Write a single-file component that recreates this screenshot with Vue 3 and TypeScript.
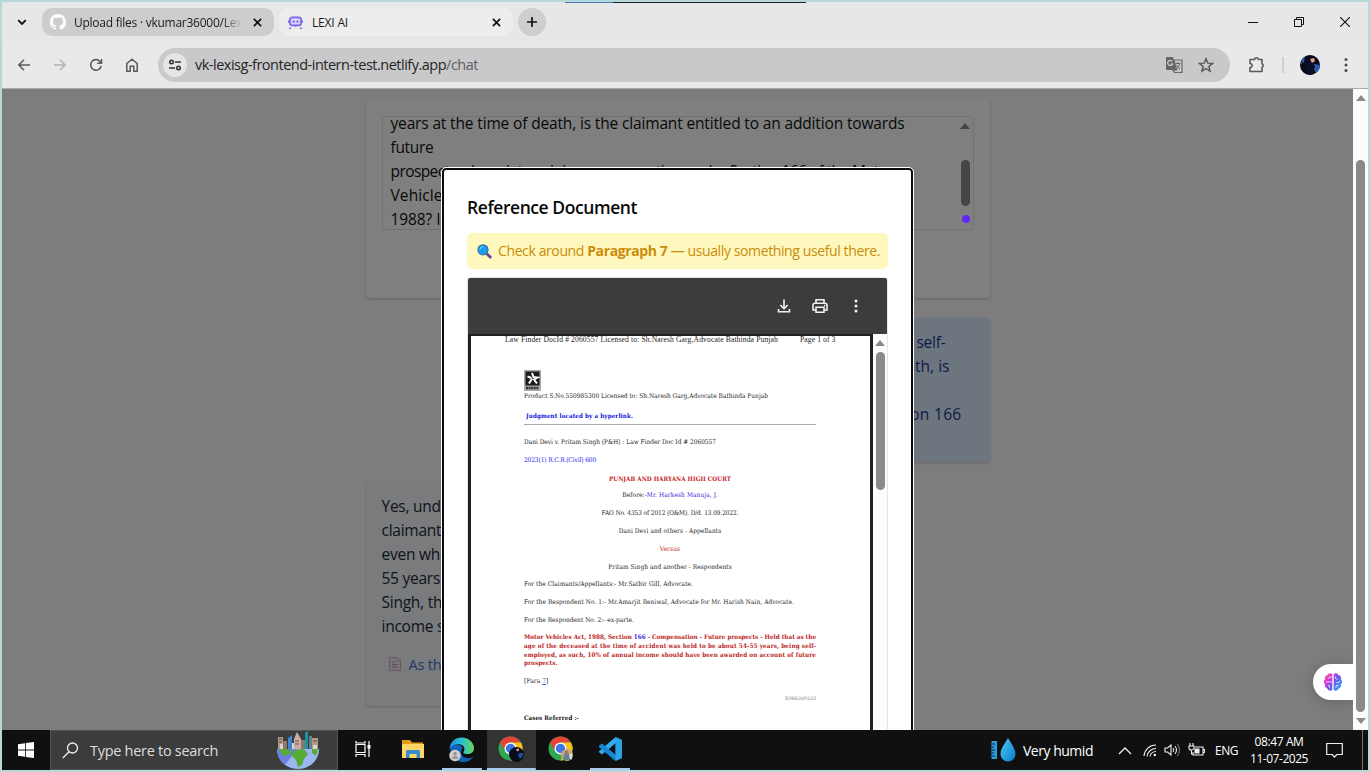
<script setup lang="ts">
import type { Directive } from 'vue'

// Tunes letter spacing so a single line of text takes the given width.
const vFit: Directive<HTMLElement, number> = {
  mounted(el, binding) {
    const count = (el.textContent ?? '').trim().length
    const natural = el.getBoundingClientRect().width
    if (count > 0) el.style.letterSpacing = `${(binding.value - natural) / count}px`
  },
}

interface Part { text: string; tone?: string }
interface Line { parts: Part[]; width: number; center?: boolean; bold?: boolean }

const question: { text: string; width: number }[] = [
  { text: 'years at the time of death, is the claimant entitled to an addition towards', width: 514 },
  { text: 'future', width: 43 },
  { text: 'prospects when determining compensation under Section 166 of the Motor', width: 503 },
  { text: 'Vehicles Act,', width: 91 },
  { text: '1988? If so, how much?', width: 165 },
]

const sent: { text: string; width: number }[] = [
  { text: 'In a motor accident claim where the deceased person was self-', width: 439 },
  { text: 'employed and aged about 54-55 years at the time of death, is', width: 443 },
  { text: 'the claimant entitled to an addition towards future', width: 360 },
  { text: 'prospects when computing compensation under Section 166', width: 455 },
  { text: 'of the Motor Vehicles Act, 1988? If so, how much?', width: 350 },
]

const answer = [
  'Yes, under Section 166 of the Motor Vehicles Act, 1988, the',
  'claimants are entitled to an addition for future prospects',
  'even when the deceased was self-employed and aged 54-',
  '55 years at the time of the accident. In Dani Devi v. Pritam',
  'Singh, the Court held that 10% of the deceased’s annual',
  'income should be awarded as future prospects.',
]

const lines: Line[] = [
  { parts: [{ text: 'Dani Devi v. Pritam Singh (P&H) : Law Finder Doc Id # 2060557' }], width: 192 },
  { parts: [{ text: '2023(1) R.C.R.(Civil) 600', tone: 'blue' }], width: 72 },
  { parts: [{ text: 'PUNJAB AND HARYANA HIGH COURT', tone: 'red' }], width: 122, center: true, bold: true },
  { parts: [{ text: 'Before:-' }, { text: 'Mr. Harkesh Manuja, J.', tone: 'violet' }], width: 95.5, center: true },
  { parts: [{ text: 'FAO No. 4353 of 2012 (O&M). D/d. 13.09.2022.' }], width: 137, center: true },
  { parts: [{ text: 'Dani Devi and others - Appellants' }], width: 102.5, center: true },
  { parts: [{ text: 'Versus', tone: 'red' }], width: 20.5, center: true },
  { parts: [{ text: 'Pritam Singh and another - Respondents' }], width: 123.5, center: true },
  { parts: [{ text: 'For the Claimants/Appellants:- Mr.Satbir Gill, Advocate.' }], width: 169 },
  { parts: [{ text: 'For the Respondent No. 1:- Mr.Amarjit Beniwal, Advocate for Mr. Harish Nain, Advocate.' }], width: 270 },
  { parts: [{ text: 'For the Respondent No. 2:- ex-parte.' }], width: 110 },
]

const headnote: Line[] = [
  { parts: [{ text: 'Motor Vehicles Act, 1988, Section ' }, { text: '166', tone: 'violet' }, { text: ' - Compensation - Future prospects - Held that as the' }], width: 292 },
  { parts: [{ text: 'age of the deceased at the time of accident was held to be about 54-55 years, being self-' }], width: 292 },
  { parts: [{ text: 'employed, as such, 10% of annual income should have been awarded on account of future' }], width: 292 },
  { parts: [{ text: 'prospects.' }], width: 33.5 },
]
</script>

<template>
  <div class="screen">
    <div class="top-edge"></div>
    <header class="tabs">
      <svg class="tab-menu" width="12" height="12" viewBox="0 0 12 12"><path d="M2.2 4.2 6 8l3.800-3.800" fill="none" stroke="#111" stroke-width="1.9" /></svg>
      <div class="tab old">
        <svg class="fav" width="16" height="16" viewBox="0 0 16 16"><path fill="#fff" d="M8 0C3.580 0 0 3.580 0 8c0 3.540 2.290 6.530 5.470 7.590.4.070.550-.170.550-.380 0-.190-.010-.820-.010-1.490-2.010.370-2.530-.490-2.690-.940-.090-.230-.480-.940-.820-1.130-.280-.150-.680-.520-.010-.530.630-.010 1.080.580 1.230.820.720 1.210 1.870.870 2.330.660.070-.520.280-.870.510-1.070-1.780-.2-3.640-.890-3.640-3.950 0-.870.310-1.590.820-2.150-.080-.2-.360-1.020.080-2.120 0 0 .670-.210 2.200.820.640-.180 1.320-.270 2-.270s1.360.090 2 .270c1.530-1.040 2.200-.820 2.200-.820.440 1.100.160 1.920.080 2.120.510.560.820 1.270.820 2.150 0 3.070-1.870 3.750-3.650 3.950.290.250.540.730.540 1.480 0 1.070-.010 1.930-.010 2.200 0 .210.150.460.550.380A8 8 0 0 0 16 8c0-4.420-3.580-8-8-8z" /></svg>
        <span class="tab-name"><span v-fit="171" class="t">Upload files · vkumar36000/Lexi</span></span>
        <svg class="x" width="9" height="9" viewBox="0 0 10 10"><path d="m1 1 8 8M9 1 1 9" stroke="#111" stroke-width="1.900" /></svg>
      </div>
      <div class="tab current">
        <svg class="fav" width="15" height="15" viewBox="0 0 16 16">
          <rect x="2" y="2.500" width="12" height="8.500" rx="2.500" fill="#d6cff6" stroke="#7d66e8" stroke-width="1.800" />
          <circle cx="6" cy="7" r="1" fill="#5d43d8" /><circle cx="10" cy="7" r="1" fill="#5d43d8" />
          <path d="M.5 5.500v3M15.500 5.500v3M1 14h2.500M12.500 14H15M7 12h2" stroke="#8a76ea" stroke-width="1.600" />
        </svg>
        <span class="tab-name"><span v-fit="36" class="t">LEXI AI</span></span>
        <svg class="x" width="9" height="9" viewBox="0 0 10 10"><path d="m1 1 8 8M9 1 1 9" stroke="#111" stroke-width="1.900" /></svg>
      </div>
      <div class="plus"><svg width="12" height="12" viewBox="0 0 12 12"><path d="M6 1v10M1 6h10" stroke="#111" stroke-width="1.700" /></svg></div>
      <div class="window-buttons">
        <svg width="10" height="10" viewBox="0 0 10 10"><path d="M0 5.500h10" stroke="#111" /></svg>
        <svg width="10" height="10" viewBox="0 0 10 10" fill="none" stroke="#111"><path d="M.5 2.500h7v7h-7zM2.500 2.500v-2h7v7h-2" /></svg>
        <svg width="10" height="10" viewBox="0 0 10 10"><path d="m0 0 10 10M10 0 0 10" stroke="#111" stroke-width="1.100" /></svg>
      </div>
    </header>

    <div class="toolbar">
      <div class="nav">
        <svg width="16" height="16" viewBox="0 0 16 16" fill="none" stroke="#5a5a5a" stroke-width="1.500"><path d="M14 8H3M8 2.800 2.800 8 8 13.200" /></svg>
        <svg width="16" height="16" viewBox="0 0 16 16" fill="none" stroke="#b3b3b3" stroke-width="1.500"><path d="M2 8h11M8 2.800 13.200 8 8 13.200" /></svg>
        <svg width="16" height="16" viewBox="0 0 16 16" fill="none" stroke="#5a5a5a" stroke-width="1.600"><path d="M13.200 9A5.300 5.300 0 1 1 11.800 4.200L13.500 6M13.500 2v4.300H9.200" /></svg>
        <svg width="16" height="16" viewBox="0 0 16 16" fill="none" stroke="#5a5a5a" stroke-width="1.500"><path d="M2.800 14.200V6.500L8 2.200l5.200 4.300v7.700H9.800V9.300H6.200v4.900z" /></svg>
      </div>
      <div class="address">
        <div class="site"><svg width="14" height="14" viewBox="0 0 14 14" fill="none" stroke="#333" stroke-width="1.600"><circle cx="3.500" cy="4" r="1.700" /><path d="M7 4h6M1 10h6" /><circle cx="10.500" cy="10" r="1.700" /></svg></div>
        <span v-fit="283" class="t url">vk-lexisg-frontend-intern-test.netlify.app<i>/chat</i></span>
        <svg class="translate" width="18" height="18" viewBox="0 0 18 18">
          <path d="M1 1h7l3 13H2.500Q1 14 1 12.500z" fill="#666" />
          <path d="M9 4h8v12.500H9.500L8 14h3.500z" fill="#c9c9cb" stroke="#666" stroke-width="1.200" />
          <path d="M7.300 5.700A2.500 2.500 0 1 0 7.500 8H5.500" fill="none" stroke="#ddd" stroke-width="1.100" />
          <path d="M10.500 7.500h5M13 6.200v1.300M14.500 8c-.5 2.200-1.500 3.700-3 5M11.500 9c.7 1.700 1.700 2.800 3.500 4" fill="none" stroke="#666" />
        </svg>
        <svg class="star" width="16" height="16" viewBox="0 0 16 16"><path d="m8 1.700 1.800 4.400 4.800.3-3.700 3 1.200 4.700L8 11.500l-4.100 2.600 1.200-4.700-3.700-3 4.800-.3z" fill="none" stroke="#555" stroke-width="1.400" /></svg>
      </div>
      <svg class="puzzle" width="18" height="18" viewBox="0 0 18 18"><path d="M2 3.500h4.700a1.800 1.800 0 0 1 3.600 0H14v4.300a1.800 1.800 0 0 1 0 3.400v4.300H2v-4a2 2 0 0 0 0-4z" fill="none" stroke="#5a5a5a" stroke-width="1.600" stroke-linejoin="round" /></svg>
      <div class="divider"></div>
      <svg class="avatar" width="20" height="20" viewBox="0 0 20 20"><defs><clipPath id="face"><circle cx="10" cy="10" r="10" /></clipPath></defs><g clip-path="url(#face)"><path fill="#080b1c" d="M0 0h20v20H0z" /><path fill="#2c5cab" d="m14 9 6 1v5l-3 4-4-5zM2 4l3-2-1 5-3 2z" /><path fill="#e0a591" d="m10 4 4-1 1 3-3 2z" /><path fill="#0c1026" d="m6 9 6-1 3 3-2 9H3z" /></g></svg>
      <svg class="dots" width="4" height="16" viewBox="0 0 4 16" fill="#4a4a4a"><circle cx="2" cy="2.500" r="1.500" /><circle cx="2" cy="8" r="1.500" /><circle cx="2" cy="13.500" r="1.500" /></svg>
    </div>

    <div class="viewport">
      <main class="page">
        <div class="column">
          <section class="card">
            <div class="textarea">
              <div class="typed"><div v-for="l in question" :key="l.text" class="row"><span v-fit="l.width" class="t">{{ l.text }}</span></div></div>
              <div class="area-scroll"><b class="arrow"></b><i></i></div>
            </div>
          </section>
          <section class="bubble sent">
            <div v-for="l in sent" :key="l.text" class="row"><span v-fit="l.width" class="t">{{ l.text }}</span></div>
          </section>
          <section class="bubble answer">
            <div v-for="l in answer" :key="l" class="row"><span class="t">{{ l }}</span></div>
            <div class="citation">
              <svg width="12" height="14" viewBox="0 0 12 14"><path d="M.5.500h8l3 3v10H.500zM8 1v3h3.500" fill="#f4e5f5" stroke="#c9b7cd" /><path d="M3 5h3M3 7.500h6M3 10h6" stroke="#b29fb6" /></svg>
              <span class="t">As the age of the deceased at the time of accident</span>
            </div>
          </section>
        </div>
        <div class="shade"></div>
        <div class="cursor-dot"></div>
        <div class="brain">
          <svg width="20" height="20" viewBox="0 0 20 20">
            <defs><linearGradient id="bg" x1="0" y1="0" x2="1" y2=".7"><stop offset="0" stop-color="#ff6262" /><stop offset=".35" stop-color="#d93ce0" /><stop offset=".6" stop-color="#7352e8" /><stop offset="1" stop-color="#31a8f5" /></linearGradient></defs>
            <path fill="url(#bg)" d="M9.300 2v16c-2 1.500-4.500.5-5-1.500C2.200 16 1.500 14 2 12 .3 11 .5 8.500 2 7.500 1.500 5 2.500 3.500 4.500 3c1-1.800 3.300-2.200 4.800-1zM10.700 2v16c2 1.500 4.500.5 5-1.500 2.100-.5 2.800-2.500 2.300-4.500 1.700-1 1.500-3.500 0-4.500.5-2.500-.5-4-2.500-4.500-1-1.800-3.300-2.200-4.800-1z" />
            <path d="M3 10h6M5 6.500l2-1.500h2M5 13.500h1.500V16M12.500 4.500v2l2 1M17 9l-2 2-2-1M13 16v-2.500h2.500" fill="none" stroke="#fff" stroke-opacity=".8" stroke-width=".9" />
          </svg>
        </div>

        <div class="modal">
          <h2><span v-fit="170" class="t">Reference Document</span></h2>
          <div class="hint">
            <svg width="15" height="15" viewBox="0 0 15 15"><path d="m9.500 9.500 3.800 3.600" stroke="#6b4b8b" stroke-width="2.900" stroke-linecap="round" /><circle cx="6" cy="5.800" r="5" fill="#18a0ee" stroke="#3e6ea8" stroke-width="1.200" /><path d="M3 5.500Q3.500 3 6 2.800" fill="none" stroke="#70cdfa" stroke-width="1.100" /></svg>
            <span v-fit="382" class="t">Check around <b>Paragraph 7</b> — usually something useful there.</span>
          </div>
          <div class="viewer">
            <div class="viewer-bar">
              <svg width="16" height="16" viewBox="0 0 16 16" fill="none" stroke="#f1f1f1" stroke-width="1.600"><path d="M8 1.500v9M4.300 7 8 10.700 11.700 7M2.500 11v2.700h11V11" /></svg>
              <svg width="16" height="16" viewBox="0 0 16 16" fill="none" stroke="#f1f1f1" stroke-width="1.600"><path d="M4 5V1.800h8V5M4 12H1V7.500Q1 5.300 3 5.300h10q2 0 2 2.200V12h-3M4 9.300h8v5H4z" /><path d="M12 7.500h1.300" /></svg>
              <svg width="16" height="16" viewBox="0 0 16 16" fill="#f1f1f1"><circle cx="8" cy="3" r="1.500" /><circle cx="8" cy="8" r="1.500" /><circle cx="8" cy="13" r="1.500" /></svg>
            </div>
            <div class="viewer-body">
              <article class="sheet">
                <div class="licence">
                  <span v-fit="273" class="t">Law Finder DocId # 2060557 Licensed to: Sh.Naresh Garg,Advocate Bathinda Punjab</span>
                  <span v-fit="35.500" class="t">Page 1 of 3</span>
                </div>
                <div class="body">
                  <svg class="mark" width="17" height="21" viewBox="0 0 17 21"><path fill="#aaa" d="M0 0h17v21H0z" /><path fill="#1b1b1b" d="M1.500 1.500h14v14h-14z" /><path d="m8 3 1.500 4 4 .5-3.500 2 3 4M8 8.500l-3 5M3.500 6.500l4 1.500" fill="none" stroke="#fff" stroke-width="2" /><path d="M2 18h13" stroke="#333" stroke-width="2.500" stroke-dasharray="2 .6" /></svg>
                  <div class="product"><span v-fit="244" class="t">Product S.No.550985300 Licensed to: Sh.Naresh Garg,Advocate Bathinda Punjab</span></div>
                  <div class="judgment"><span v-fit="107" class="t">Judgment located by a hyperlink.</span></div>
                  <div v-for="l in lines" :key="l.parts[0].text" class="line" :class="{ center: l.center, bold: l.bold }">
                    <span v-fit="l.width" class="t"><span v-for="p in l.parts" :key="p.text" :class="p.tone">{{ p.text }}</span></span>
                  </div>
                  <div class="headnote">
                    <div v-for="l in headnote" :key="l.parts[0].text"><span v-fit="l.width" class="t"><span v-for="p in l.parts" :key="p.text" :class="p.tone">{{ p.text }}</span></span></div>
                  </div>
                  <div class="line para"><span v-fit="24.500" class="t">[Para <u>7</u>]</span></div>
                  <div class="code"><span v-fit="31" class="t">E/06618/01/23</span></div>
                  <div class="line cases"><span v-fit="55" class="t">Cases Referred :-</span></div>
                </div>
              </article>
              <div class="viewer-scroll"><b class="arrow"></b><i></i></div>
            </div>
          </div>
        </div>
      </main>
      <div class="page-scroll"><b class="arrow"></b><i></i><b class="arrow down"></b></div>
    </div>

    <footer class="taskbar">
      <div class="start"><svg width="16" height="16" viewBox="0 0 16 16" fill="#fff"><path d="m0 2.200 7-1v6.400H0zM7.800 1.100 16 0v7.600H7.800zM0 8.400h7v6.400l-7-1zM7.800 8.400H16V16l-8.200-1.100z" /></svg></div>
      <div class="search">
        <svg width="17" height="17" viewBox="0 0 17 17" fill="none" stroke="#eee" stroke-width="1.300"><circle cx="10.500" cy="6" r="5" /><path d="M7 9.700.8 16" /></svg>
        <span v-fit="128" class="t">Type here to search</span>
        <svg class="city" width="44" height="39" viewBox="0 0 44 39">
          <path fill="#9cb6f2" d="M1 18h42c0 11-9 20-21 20S1 29 1 18z" /><path fill="#6a7fe0" d="M1 18h20L9 34C4 30 1 24 1 18z" />
          <path fill="#58ab35" d="M3 18h10l2 4-5 3-4-1zM18 19l10-1 4 5-4 5-2 6-4 2-2-7-5-5zM36 18h6l-2 7-4-3z" />
          <path fill="#b39b84" d="M2 6h5v12H2zM36 7h6v11h-6z" /><path fill="#8b7770" d="M7 10h4v8H7zM25 9h4v9h-4z" /><path fill="#3f85ce" d="m12 7 4-3v14h-4z" /><path fill="#c9aea3" d="m18 8 3-7 4 7v10h-7z" /><path fill="#1994a3" d="m29 2 3-2v18h-3z" /><path fill="#687f8c" d="M33 5h3v13h-3z" /><path fill="#d5d6d3" d="M4 13h3v5H4zM16 12h2v6h-2zM37 14h4v4h-4z" />
          <path d="M3 8h3M3 11h3M19 10h4M19 13h4M37 10h4" stroke="#604f49" />
        </svg>
      </div>
      <div class="apps">
        <div class="app"><svg width="18" height="18" viewBox="0 0 18 18" fill="none" stroke="#fff" stroke-width="1.200"><path d="M2 4.500h9v8H2zM2 1v2h9V1M2 17v-2.500h9V17M15 1v16" /><path fill="#fff" stroke="none" d="M13.500 5h3v3.500h-3z" /></svg></div>
        <div class="app"><svg width="22" height="20" viewBox="0 0 22 20"><path fill="#e19b18" d="M0 1h8l2 2.500h11V10H0z" /><path fill="#fed567" d="M0 5h22v14H0z" /><path fill="#388bc9" d="M4 19v-6.500Q4 11 5.500 11h11q1.500 0 1.500 1.500V19h-3.500v-4h-7v4z" /></svg></div>
        <div class="app open">
          <svg width="25" height="25" viewBox="0 0 25 25"><defs><linearGradient id="edge"><stop stop-color="#1b91dc" /><stop offset=".5" stop-color="#29c1d3" /><stop offset="1" stop-color="#69d65a" /></linearGradient></defs>
            <path fill="#1263b5" d="M1 10c0 9 6 15 13 15 5 0 8-2 10-5-6 3-12 0-12-5 0-2 1-3 2-4C9 5 2 6 1 10z" /><path fill="url(#edge)" d="M.5 12C1 5 6 .5 12.500.500 20 .5 25 6 25 11c0 5-4 6.500-8 6-3-.4-3-1.500-2-3 2-4-2-7-6-7-4 0-7 2-8.500 5z" /><circle cx="6" cy="18.500" r="5.700" fill="#d2d2d2" /><circle cx="6" cy="16.700" r="2" fill="#9a9a9a" /><path fill="#9a9a9a" d="M2.500 22c0-4 7-4 7 0z" /></svg>
        </div>
        <div v-for="n in 2" :key="n" class="app" :class="{ focused: n === 1 }">
          <svg width="26" height="26" viewBox="0 0 26 26"><circle cx="12.500" cy="12.500" r="12" fill="#30a852" /><path fill="#e54335" d="M2.100 6.500a12 12 0 0 1 20.800 0H12.500l-5.200 9z" /><path fill="#fbc117" d="M22.900 6.500a12 12 0 0 1-10.400 18l5.200-9-5.200-9z" /><circle cx="12.500" cy="12.500" r="6" fill="#fff" /><circle cx="12.500" cy="12.500" r="4.700" fill="#3978e6" />
            <g v-if="n === 1"><circle cx="18.500" cy="18.500" r="7.500" fill="#080b1a" /><path fill="#204a99" d="m21 17 4 0v3l-3 3-2-3z" /><path fill="#d39a84" d="m18 13 3-.5v2l-2 1z" /></g>
            <g v-else><circle cx="19" cy="19" r="6" fill="#c9a878" /><path fill="#69808f" d="m15 24 1-6h5l3 6z" /><circle cx="18.500" cy="16.500" r="2" fill="#9d7d63" /><path fill="#dde0df" d="m21 19 3-2v6h-2z" /></g>
          </svg>
        </div>
        <div class="app open"><svg width="24" height="24" viewBox="0 0 24 24"><path fill="#0c78bd" d="M17.500 0 24 3v18l-6.500 3z" /><path fill="#32a9ed" d="m17.500 0 1 5.500L4 17.500l-3-2.300v-1z" /><path fill="#1687d2" d="M1 8.800 4 6.500l14.500 12-1 5.500L1 10z" /><path fill="#2ba1e7" d="M17.500 0 24 3v18l-6.500 3z" /></svg></div>
      </div>
      <div class="weather">
        <svg width="25" height="25" viewBox="0 0 25 25"><defs><linearGradient id="drop" x2="1" y2="1"><stop stop-color="#50c8f3" /><stop offset="1" stop-color="#087dcc" /></linearGradient></defs><path fill="#2e9bdc" d="M.5 3h5.500v18H.5z" /><path d="M1 6h3M1 9h2M1 12h3M1 15h2M1 18h3" stroke="#092b48" /><path fill="url(#drop)" d="M17 0c3 5 7.500 11 7.500 16a7.500 7.500 0 0 1-15 0C9.500 11 14 5 17 0z" /></svg>
        <span v-fit="70" class="t">Very humid</span>
      </div>
      <div class="tray">
        <svg width="14" height="9" viewBox="0 0 14 9"><path d="m1 8 6-6 6 6" fill="none" stroke="#eee" stroke-width="1.300" /></svg>
        <svg width="14" height="14" viewBox="0 0 14 14" fill="none" stroke="#eee" stroke-width="1.100"><path d="M1 13A12 12 0 0 1 13 2M4 13.500a9 9 0 0 1 9-8M7 13.500a6 6 0 0 1 6-5" /><circle cx="11.800" cy="12" r="1.300" fill="#eee" stroke="none" /></svg>
        <svg width="17" height="14" viewBox="0 0 17 14" fill="none" stroke="#eee" stroke-width="1.100"><path d="M1 5v4h2.500L7 12V2L3.500 5zM9 5q1.500 2 0 4M11 3q3 4 0 8" /><path d="M13.300 1q4.500 6 0 12" stroke="#777" /></svg>
        <svg width="17" height="14" viewBox="0 0 17 14" fill="none" stroke="#eee" stroke-width="1.100"><path d="M7 4h8v8H5V9M15 6.500h1.500v3H15" /><path fill="#eee" d="M7 6h4v4H7z" /><path d="M1 3h5v2.500Q5 7 3.500 7 1 7 1 5zM2 0v3M5 0v3M3.500 7v4H5" /></svg>
        <span v-fit="23" class="t lang">ENG</span>
      </div>
      <div class="clock"><span v-fit="49" class="t">08:47 AM</span><span v-fit="58" class="t">11-07-2025</span></div>
      <svg class="note" width="17" height="17" viewBox="0 0 17 17"><path d="M.7 1.500h15.600v11h-5.500L8.500 15l-2.300-2.500H.700z" fill="none" stroke="#eee" stroke-width="1.200" /></svg>
      <div class="peek"></div>
    </footer>
  </div>
</template>

<style>
html, body { margin: 0; overflow: hidden; }
</style>

<style scoped>
* { box-sizing: border-box; }
svg { display: block; flex: none; }
.t { display: inline-block; white-space: pre; }
.screen { position: relative; display: flex; flex-direction: column; width: 1370px; height: 772px; border: 2px solid #b7d8d9; background: #e6e6e6; font-family: "Open Sans", "Noto Sans", sans-serif; overflow: hidden; }
.top-edge { position: absolute; left: 563px; top: -1px; width: 241px; height: 2px; background: linear-gradient(90deg, #4978ba 0 48px, #1c2129 48px); }
.tabs { display: flex; align-items: center; height: 40px; padding-left: 14px; flex: none; font-size: 12px; color: #1b1b1b; background: #e7e7e7; }
.tab-menu { margin-right: 14px; }
.tab { display: flex; align-items: center; height: 28px; border-radius: 10px; padding: 0 12px 0 8px; }
.tab.old { width: 232px; background: #cdcdcd; margin-right: 5px; }
.tab.current { width: 234px; background: #ededed; margin-right: 5px; padding-left: 9px; }
.tab-name { flex: 1; margin-left: 8px; overflow: hidden; white-space: nowrap; }
.current .tab-name { margin-left: 9px; }
.old .tab-name { mask-image: linear-gradient(90deg, #000 88%, transparent); margin-right: 11px; }
.plus { display: grid; place-items: center; width: 28px; height: 28px; border-radius: 50%; background: #cecece; }
.window-buttons { display: flex; gap: 36px; margin-left: auto; margin-right: 18px; }
.toolbar { display: flex; align-items: center; height: 47px; padding-bottom: 1px; flex: none; background: #e9e9e9; border-bottom: 1px solid #aaa; }
.nav { display: flex; gap: 20px; margin: 0 18px 0 14px; }
.address { display: flex; align-items: center; width: 1072px; height: 34px; border-radius: 17px; background: #c9c9cb; padding: 0 16px 0 5px; }
.site { display: grid; place-items: center; width: 24px; height: 24px; border-radius: 50%; background: #e5e5e5; margin-right: 8px; }
.url { font-size: 14.500px; color: #252525; }
.url i { font-style: normal; color: #606060; }
.translate { margin-left: auto; margin-right: 15px; }
.puzzle { margin-left: 18px; }
.divider { width: 2px; height: 16px; background: #cfcfcf; margin: 0 16px; }
.dots { margin-left: 24px; }
.viewport { display: flex; height: 641px; flex: none; }
.page { position: relative; width: 1351px; height: 641px; overflow: hidden; background: #fbfbfb; }
.column { display: flex; flex-direction: column; width: 624px; margin: 10px auto 0; }
.card { height: 199px; padding: 17px 16px; border-radius: 4px; background: #fff; box-shadow: 0 1px 3px #0003; margin-bottom: 20px; flex: none; }
.textarea { display: flex; height: 114px; border: 1px solid #e5e5e5; border-radius: 4px; overflow: hidden; }
.typed { flex: 1; padding: 0 8px; margin-top: -6px; font-size: 15.500px; color: #111; }
.row { height: 24px; line-height: 24px; white-space: nowrap; }
.arrow { border: 5px solid transparent; border-top: 0; border-bottom: 6px solid #8a8a8a; width: 0; height: 0; }
.arrow.down { transform: rotate(180deg); }
.area-scroll { display: flex; flex-direction: column; align-items: center; width: 15px; padding-top: 6px; gap: 31px; }
.area-scroll i { width: 9px; height: 46px; border-radius: 5px; background: #8a8a8a; }
.bubble { width: 499px; padding: 12px 16px; border-radius: 4px; font-size: 15.500px; box-shadow: 0 1px 3px #0003; flex: none; }
.sent { height: 144px; align-self: flex-end; background: #dbeafe; color: #1c398e; margin-bottom: 20px; }
.answer { height: 224px; background: #f3f6fa; color: #1e2939; }
.answer .row { letter-spacing: -.25px; }
.citation { display: flex; align-items: center; gap: 8px; margin: 14px 0 0 7px; height: 24px; font-size: 14.500px; letter-spacing: -.2px; color: #4a6fd8; }
.shade { position: absolute; inset: 0; background: rgba(0, 0, 0, .5); }
.cursor-dot { position: absolute; left: 960px; top: 126px; width: 8px; height: 8px; border-radius: 50%; background: #6129f5; }
.brain { position: absolute; right: 0; top: 575px; display: flex; align-items: center; width: 40px; height: 36px; padding-left: 10px; border-radius: 18px 0 0 18px; background: #fff; box-shadow: 0 2px 14px #0003; }
.modal { position: absolute; left: 440px; top: 79px; width: 471px; height: 620px; padding: 24px 23px; border: 2px solid #0b0b0b; outline: 1px solid #fff; border-radius: 4px; background: #fff; }
h2 { margin: 0; height: 27px; line-height: 27px; font-size: 17.500px; font-weight: 600; color: #090909; }
.hint { display: flex; align-items: center; gap: 6px; height: 36px; margin-top: 12px; padding-left: 10px; border-radius: 5px; background: #fef8bf; color: #cc8b08; font-size: 14px; white-space: nowrap; width: 421px; }
.hint .t { margin-top: -1px; }
.viewer { width: 421px; height: 500px; margin-top: 8px; border: 1px solid #e5e5e5; border-radius: 3px; overflow: hidden; }
.viewer-bar { display: flex; justify-content: flex-end; align-items: center; gap: 20px; height: 56px; padding-right: 23px; background: #3c3c3c; }
.viewer-body { display: flex; height: 444px; background: #202020; }
.sheet { width: 399px; margin: 2px 3px 0 3px; background: #fff; color: #222; font-family: "DejaVu Serif Condensed", "DejaVu Serif", "Liberation Serif", serif; font-stretch: condensed; font-size: 6.500px; }
.licence { display: flex; gap: 22px; padding-left: 34px; height: 8px; line-height: 8px; font-family: "Liberation Serif", serif; font-size: 7.600px; }
.body { padding: 26px 54px 0 53px; }
.product { height: 10px; line-height: 10px; }
.judgment { height: 24px; padding: 9px 0 0 2px; line-height: 12px; color: #1313e0; font-weight: 700; font-size: 6.200px; border-bottom: 1px solid #aaa; margin-bottom: 9px; }
.line { height: 17.800px; line-height: 17.800px; white-space: nowrap; }
.center { text-align: center; }
.bold, .cases { font-weight: 700; font-size: 6.200px; }
.blue { color: #1616ee; }
.violet { color: #4322d8; }
.red { color: #c82025; }
.headnote { color: #bd1c22; font-weight: 700; font-size: 6.300px; line-height: 8.800px; margin-top: 3.200px; height: 35.500px; white-space: nowrap; }
.headnote > div { height: 8.800px; }
.para { margin-top: 4.300px; }
.para u { color: #246bc1; }
.code { height: 15px; line-height: 14px; font-size: 4.900px; color: #777; text-align: right; }
.cases { margin-top: 3px; color: #111; }
.viewer-scroll { display: flex; flex-direction: column; align-items: center; width: 14px; padding-top: 6px; gap: 6px; background: #fcfcfc; }
.viewer-scroll i { width: 9px; height: 138px; border-radius: 5px; background: #8b8b8b; }
.page-scroll { display: flex; flex-direction: column; align-items: center; width: 15px; background: #fcfcfc; padding: 6px 0; }
.page-scroll i { width: 9px; height: 552px; border-radius: 5px; background: #8a8a8a; margin: 59px 0 6px; }
.taskbar { display: flex; height: 40px; flex: none; background: #101010; color: #fff; }
.start { display: grid; place-items: center; width: 48px; }
.search { display: flex; align-items: center; width: 288px; padding-left: 11px; background: #3c3c3c; border: 1px solid #555; color: #dedede; font-size: 14.500px; white-space: nowrap; }
.search .t { margin-left: 11px; }
.city { margin-left: auto; margin-right: 17px; }
.apps { display: flex; gap: 1px; margin-left: 1px; }
.app { display: grid; place-items: center; width: 48.400px; border-bottom: 2px solid transparent; }
.app.open { background: linear-gradient(#a9c8ef, #a9c8ef) center bottom / 40px 2px no-repeat border-box; }
.app.focused { background: linear-gradient(#a9c8ef, #a9c8ef) center bottom / 100% 2px no-repeat border-box, #333; }
.weather { display: flex; align-items: center; gap: 7px; margin-left: auto; margin-right: 25px; font-size: 14px; }
.tray { display: flex; align-items: center; gap: 7px; margin-right: 11px; font-size: 12px; }
.tray > svg:first-child { margin-right: 4px; }
.lang { margin-left: 3px; }
.clock { display: flex; flex-direction: column; align-items: center; justify-content: center; width: 60px; font-size: 12px; line-height: 17px; margin-right: 17px; }
.note { align-self: center; margin-right: 19px; }
.peek { width: 6px; border-left: 1px solid #777; }
</style>
